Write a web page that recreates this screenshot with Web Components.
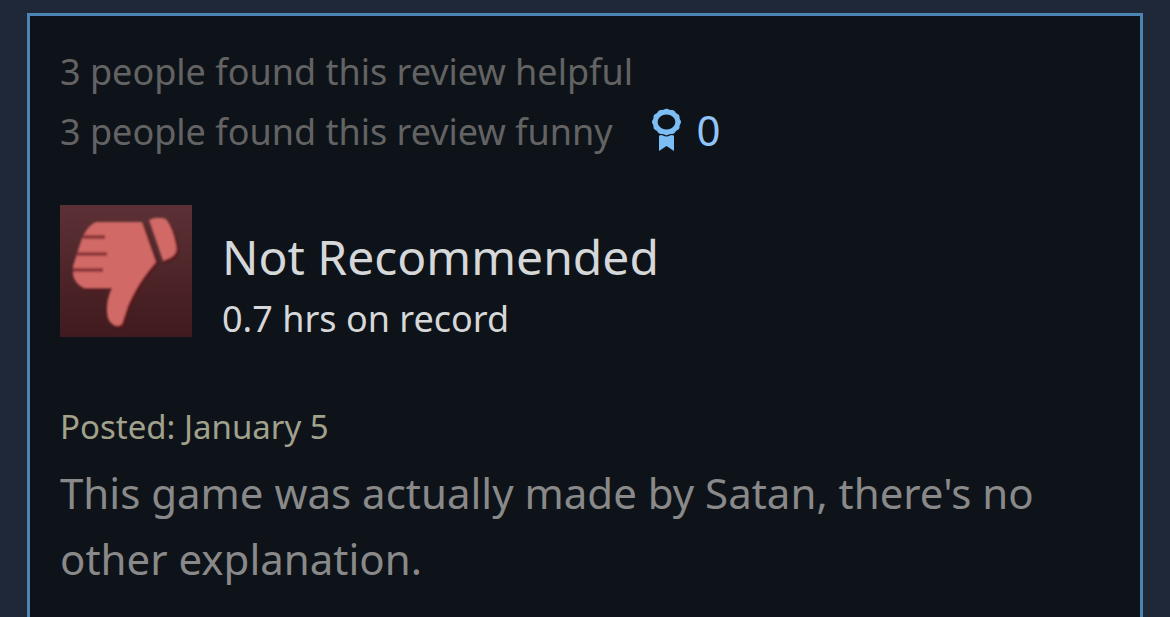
<!DOCTYPE html>
<html lang="en">
<head>
<meta charset="utf-8">
<meta name="viewport" content="width=device-width, initial-scale=1">
<title>Review</title>
<style>
html { background: #1f2838; }
body { margin: 0; font-family: "Noto Sans", "Open Sans", sans-serif; color: #d6d7d9; }
</style>
</head>
<body>
<review-card>
  <review-votes slot="votes">
    <span slot="helpful">3 people found this review helpful</span>
    <span slot="funny">3 people found this review funny</span>
    <award-count slot="awards">0</award-count>
  </review-votes>
  <review-verdict slot="verdict">
    <span slot="title">Not Recommended</span>
    <span slot="hours">0.7 hrs on record</span>
  </review-verdict>
  <review-body>
    <span slot="date">Posted: January 5</span>
    This game was actually made by Satan, there's no other explanation.
  </review-body>
</review-card>
<script>
class ReviewElement extends HTMLElement {
  constructor() {
    super();
    this.attachShadow({ mode: 'open' }).innerHTML = this.constructor.markup;
  }
}

class ReviewCard extends ReviewElement {
  static markup = `
    <style>
      :host { display: flex; box-sizing: border-box; min-height: 100vh; padding: 13px 27px 0; }
      article { flex: 1; box-sizing: border-box; border: 3px solid #4c84b4; border-bottom: 0; padding: 26px 30px 20px; background: #0e131a; }
    </style>
    <article>
      <slot name="votes"></slot>
      <slot name="verdict"></slot>
      <slot></slot>
    </article>`;
}

class ReviewVotes extends ReviewElement {
  static markup = `
    <style>
      :host { display: block; font-size: 36px; line-height: 60px; color: #636363; }
      .row { display: flex; align-items: flex-start; gap: 38px; }
      p { margin: 0; }
    </style>
    <p><slot name="helpful"></slot></p>
    <div class="row"><p><slot name="funny"></slot></p><slot name="awards"></slot></div>`;
}

class AwardCount extends ReviewElement {
  static markup = `
    <style>
      :host { display: flex; align-items: center; gap: 14px; line-height: 56px; font-size: 42px; color: #93c4f8; }
      svg { display: block; width: 32px; height: 46px; color: #7cbdf3; }
    </style>
    <svg viewBox="0 0 32 46" role="img" aria-label="Awards" fill="currentColor">
      <path id="seal" fill-rule="evenodd"/>
      <path d="M8 28.700Q10 27.500 12 28.500Q15.500 30.300 19 28.500Q21 27.500 23 28.700V44L15.500 39L8 44Z"/>
    </svg>
    <span><slot></slot></span>`;

  connectedCallback() {
    // Scalloped rosette with an open centre.
    const points = [];
    for (let i = 0; i < 144; i++) {
      const a = i * Math.PI / 72;
      const r = 14.1 + 0.4 * Math.cos(12 * a);
      points.push((15.5 + r * Math.sin(a)).toFixed(2) + ' ' + (15 - r * 0.92 * Math.cos(a)).toFixed(2));
    }
    this.shadowRoot.querySelector('#seal').setAttribute('d',
      'M' + points.join('L') + 'ZM15.500 7.600a8.800 7.500 0 1 0 .01 0Z');
  }
}

class ReviewVerdict extends ReviewElement {
  static markup = `
    <style>
      :host { display: flex; align-items: flex-start; gap: 30px; margin-top: 43px; }
      p { margin: 0; }
      .text { padding-top: 20px; }
      .title { font-size: 48px; line-height: 64px; }
      .hours { font-size: 36px; line-height: 60px; }
    </style>
    <thumb-down></thumb-down>
    <div class="text">
      <p class="title"><slot name="title"></slot></p>
      <p class="hours"><slot name="hours"></slot></p>
    </div>`;
}

class ThumbDown extends ReviewElement {
  static markup = `
    <style>
      :host { flex: none; display: block; width: 132px; height: 132px; background: linear-gradient(#5c3135, #401a1e); }
      svg { display: block; width: 100%; height: 100%; }
    </style>
    <svg viewBox="0 0 132 132" role="img" aria-label="Thumb down">
      <defs>
        <filter id="soft" x="-10%" y="-10%" width="120%" height="120%"><feGaussianBlur stdDeviation="0.9"/></filter>
        <g id="hand">
          <path d="M36 17H82L96 57C82 73 74 87 68 101Q65 110 62 119Q60 121 56 121Q47 118 47 107Q46 95 52 83H24Q15 79 13 70V61L21 36Q27 20 36 17Z"/>
          <path d="M89 15Q97 11 106 14Q113 23 116 40Q118 48 112 52L103 56Z"/>
        </g>
      </defs>
      <g filter="url(#soft)">
        <use href="#hand" x="2" y="2" fill="#5c171b"/>
        <use href="#hand" fill="#d16966"/>
        <path d="M23 32H45M17 49H47M13 65H43" fill="none" stroke="#8f393b" stroke-width="4"/>
      </g>
    </svg>`;
}

class ReviewBody extends ReviewElement {
  static markup = `
    <style>
      :host { display: block; margin-top: 45px; color: #898989; }
      p { margin: 0; }
      .date { font-size: 33px; line-height: 66px; color: #a1a18c; }
      .text { font-size: 42px; line-height: 66px; }
    </style>
    <p class="date"><slot name="date"></slot></p>
    <p class="text"><slot></slot></p>`;
}

customElements.define('review-card', ReviewCard);
customElements.define('review-votes', ReviewVotes);
customElements.define('award-count', AwardCount);
customElements.define('review-verdict', ReviewVerdict);
customElements.define('thumb-down', ThumbDown);
customElements.define('review-body', ReviewBody);
</script>
</body>
</html>
